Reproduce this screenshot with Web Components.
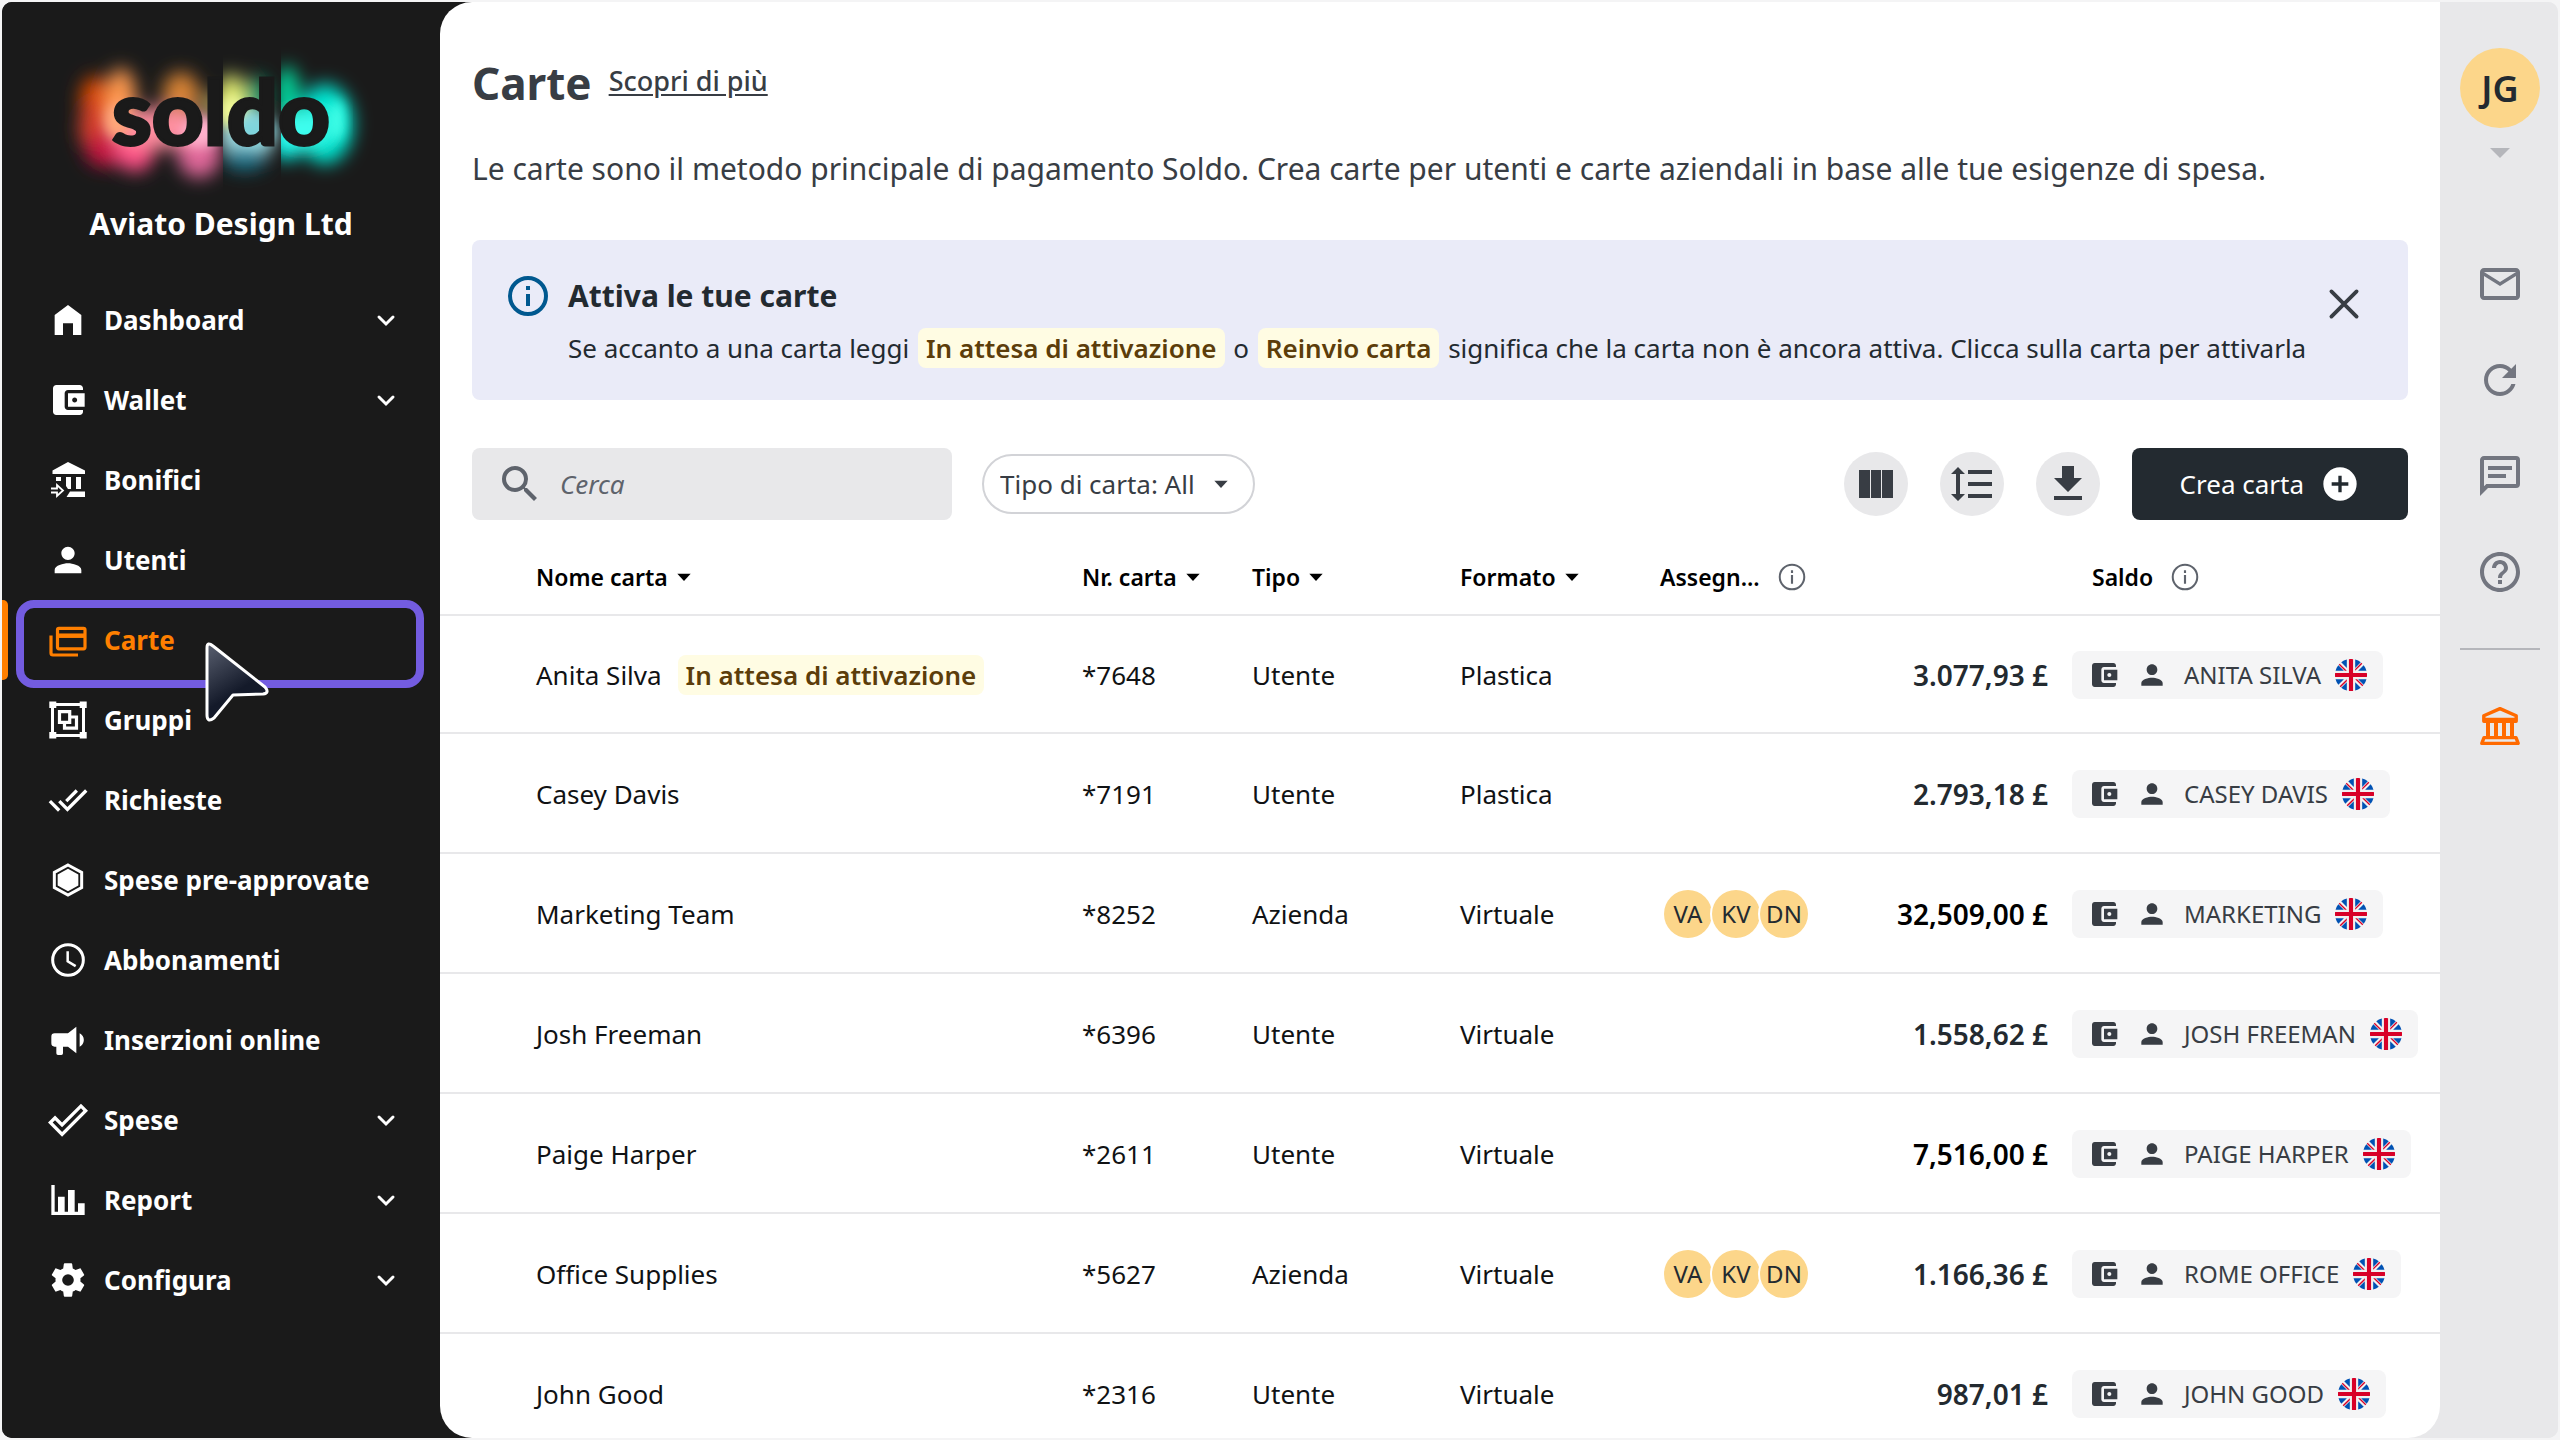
<!DOCTYPE html>
<html lang="it">
<head>
<meta charset="utf-8">
<title>Carte</title>
<style>
  :root {
    --dark: #1a1a1a;
    --ink: #232a30;
    --slate: #383d44;
    --grey: #737680;
    --rail: #e8e8ea;
    --orange: #ff7f00;
    --badge-bg: #fffce3;
    --badge-ink: #5c3d0a;
  }
  body {
    margin: 0;
    background: #f4f4f5;
    font-family: "Noto Sans", "Open Sans", sans-serif;
    font-size: 26px;
    color: #101214;
  }
</style>
</head>
<body>
<app-shell>
  <side-bar slot="sidebar" company="Aviato Design Ltd">
    <nav-item icon="home" expandable>Dashboard</nav-item>
    <nav-item icon="wallet" expandable>Wallet</nav-item>
    <nav-item icon="transfer">Bonifici</nav-item>
    <nav-item icon="person">Utenti</nav-item>
    <nav-item icon="cards" active>Carte</nav-item>
    <nav-item icon="group">Gruppi</nav-item>
    <nav-item icon="done-all">Richieste</nav-item>
    <nav-item icon="hexagon">Spese pre-approvate</nav-item>
    <nav-item icon="clock">Abbonamenti</nav-item>
    <nav-item icon="megaphone">Inserzioni online</nav-item>
    <nav-item icon="check" expandable>Spese</nav-item>
    <nav-item icon="chart" expandable>Report</nav-item>
    <nav-item icon="gear" expandable>Configura</nav-item>
  </side-bar>
  <page-header heading="Carte" link="Scopri di più">Le carte sono il metodo principale di pagamento Soldo. Crea carte per utenti e carte aziendali in base alle tue esigenze di spesa.</page-header>
  <info-banner heading="Attiva le tue carte">Se accanto a una carta leggi <status-badge>In attesa di attivazione</status-badge> o <status-badge>Reinvio carta</status-badge> significa che la carta non è ancora attiva. Clicca sulla carta per attivarla</info-banner>
  <table-toolbar></table-toolbar>
  <cards-table></cards-table>
  <tool-rail slot="rail"></tool-rail>
</app-shell>

<script>
const ICONS = {
  home: '<path d="M4 21V9l8-6 8 6v12h-5v-7H9v7z"/>',
  wallet: '<path d="M21 18v1c0 1.1-.9 2-2 2H5c-1.11 0-2-.9-2-2V5c0-1.1.89-2 2-2h14c1.1 0 2 .9 2 2v1h-9c-1.11 0-2 .9-2 2v8c0 1.1.89 2 2 2h9zm-9-2h10V8H12v8zm4-2.500c-.83 0-1.500-.67-1.500-1.500s.67-1.500 1.500-1.500 1.500.67 1.500 1.500-.67 1.500-1.500 1.500z"/>',
  transfer: '<g transform="scale(.6)"><path d="M20 2l17 8.500V14H4.500v-3.500zM8 17h5v4H8zM18 17h5v12h-3l-2-3zM28 17h5v12h-5zM22 31.500h15V37H18.500z"/><path fill="none" stroke="currentColor" stroke-width="1.800" d="M3 28.500h6V25l6 5.500-6 5.500v-3.500H3"/></g>',
  person: '<path d="M12 12c2.210 0 4-1.790 4-4s-1.790-4-4-4-4 1.790-4 4 1.790 4 4 4zm0 2c-2.670 0-8 1.340-8 4v2h16v-2c0-2.660-5.330-4-8-4z"/>',
  cards: '<g transform="scale(.6)" fill="none" stroke="currentColor" stroke-width="3.200"><rect x="9.500" y="8.300" width="27.500" height="20.500" rx="1.500"/><path d="M9 15.700h28" stroke-width="4.500"/><path d="M3 15.500V33q0 2 2 2h25"/></g>',
  group: '<g transform="scale(.6)"><path fill="none" stroke="currentColor" stroke-width="3" d="M4.500 4.500h31v31h-31z"/><path d="M1.300 1.500h7v6.500h-7zM31.700 1.500h7v6.500h-7zM1.300 32h7v6.500h-7zM31.700 32h7v6.500h-7z"/><path fill="none" stroke="currentColor" stroke-width="3.200" d="M11.500 11.700h10.200v10.600H11.500zM22 17h6.500v11.200h-12V23"/></g>',
  'done-all': '<path d="M18 7l-1.410-1.410-6.340 6.340 1.410 1.410L18 7zm4.240-1.410L11.660 16.170 7.480 12l-1.410 1.410L11.660 19l12-12-1.420-1.410zM.410 13.410L6 19l1.410-1.410L1.830 12 .410 13.410z"/>',
  hexagon: '<path fill="none" stroke="currentColor" stroke-width="1.800" d="M12 3l8.200 4.500v9L12 21l-8.200-4.500v-9z"/><path d="M12 5.300l6.200 3.400v6.600L12 18.700l-6.200-3.400V8.700z"/>',
  clock: '<circle cx="12" cy="12" r="9.200" fill="none" stroke="currentColor" stroke-width="1.800"/><path fill="none" stroke="currentColor" stroke-width="1.500" d="M11.800 6.800v6l4.800 2.900"/>',
  megaphone: '<path d="M12 8H4a2 2 0 0 0-2 2v4a2 2 0 0 0 2 2h1v4a1 1 0 0 0 1 1h2a1 1 0 0 0 1-1v-4h3l5 4V4l-5 4m9.500 4c0 1.710-.96 3.260-2.500 4V8c1.530.75 2.500 2.300 2.500 4z"/>',
  check: '<path fill-rule="evenodd" d="M19.780 2.200L24 6.440 8.440 22 0 13.550l4.220-4.220 4.220 4.220L19.780 2.200m0 2.800L8.440 16.360l-4.220-4.170-1.410 1.360 5.630 5.620L21.190 6.440 19.780 5z"/>',
  chart: '<path d="M22 21H2V3h2v16h2v-9h4v9h2V6h4v13h2v-5h4v7z"/>',
  gear: '<path d="M12 15.500A3.500 3.500 0 0 1 8.500 12 3.500 3.500 0 0 1 12 8.500a3.500 3.500 0 0 1 3.500 3.500 3.500 3.500 0 0 1-3.500 3.500m7.430-2.530c.04-.32.07-.64.07-.97s-.03-.66-.07-1l2.110-1.630c.19-.15.24-.42.12-.64l-2-3.460c-.12-.22-.39-.31-.61-.22l-2.490 1c-.52-.39-1.060-.73-1.690-.98l-.37-2.650A.506.506 0 0 0 14 2h-4c-.25 0-.46.18-.5.42l-.37 2.650c-.63.25-1.170.59-1.690.98l-2.490-1c-.22-.09-.49 0-.61.22l-2 3.460c-.13.22-.07.49.12.64L4.570 11c-.04.34-.07.67-.07 1s.03.65.07.97l-2.110 1.660c-.19.15-.25.42-.12.64l2 3.460c.12.22.39.3.61.22l2.490-1.010c.52.4 1.060.74 1.690.99l.37 2.650c.04.24.25.42.5.42h4c.25 0 .46-.18.5-.42l.37-2.650c.63-.26 1.170-.59 1.690-.99l2.490 1.010c.22.08.49 0 .61-.22l2-3.460c.12-.22.07-.49-.12-.64z"/>',
  chevron: '<path fill="none" stroke="currentColor" stroke-width="3" stroke-linecap="round" d="M5 9l7 7 7-7"/>',
  search: '<path d="M15.500 14h-.79l-.28-.27A6.471 6.471 0 0 0 16 9.500 6.500 6.500 0 1 0 9.500 16c1.610 0 3.090-.59 4.230-1.570l.27.28v.79l5 4.990L20.490 19l-4.990-5zm-6 0C7.010 14 5 11.990 5 9.500S7.010 5 9.500 5 14 7.010 14 9.500 11.990 14 9.500 14z"/>',
  columns: '<path d="M3.500 5H9v14H3.500zM9.500 5h5v14h-5zM15 5h5.500v14H15z"/>',
  spacing: '<path d="M10 13h12v-2H10m0 8h12v-2H10m0-10h12V5H10M6 7h2.500L5 3.500 1.500 7H4v10H1.500L5 20.500 8.500 17H6V7z"/>',
  download: '<path d="M5 20h14v-2H5m14-9h-4V3H9v6H5l7 7 7-7z"/>',
  plus: '<path d="M17 13h-4v4h-2v-4H7v-2h4V7h2v4h4m-5-9A10 10 0 1 0 22 12 10 10 0 0 0 12 2z"/>',
  info: '<circle cx="12" cy="12" r="9" fill="none" stroke="currentColor" stroke-width="2"/><path d="M11 7h2v2h-2zM11 11h2v6h-2z"/>',
  'info-thin': '<circle cx="12" cy="12" r="9.200" fill="none" stroke="currentColor" stroke-width="1.500"/><path d="M11.200 7h1.600v2h-1.600zM11.200 10.500h1.600V17h-1.600z"/>',
  close: '<path fill="none" stroke="currentColor" stroke-width="1.900" stroke-linecap="round" d="M5.700 5.700l12.600 12.600M18.300 5.700L5.700 18.300"/>',
  caret: '<path d="M2 7h20L12 18z"/>',
  mail: '<path d="M20 4H4c-1.100 0-2 .9-2 2v12c0 1.100.9 2 2 2h16c1.100 0 2-.9 2-2V6c0-1.100-.9-2-2-2zm0 14H4V8l8 5 8-5v10zm-8-7L4 6h16l-8 5z"/>',
  refresh: '<path d="M17.650 6.350C16.200 4.900 14.210 4 12 4c-4.420 0-7.990 3.580-7.990 8s3.570 8 7.990 8c3.730 0 6.840-2.550 7.730-6h-2.080c-.82 2.330-3.040 4-5.650 4-3.310 0-6-2.690-6-6s2.690-6 6-6c1.660 0 3.140.69 4.220 1.780L13 11h7V4l-2.350 2.350z"/>',
  chat: '<path d="M20 2a2 2 0 0 1 2 2v12a2 2 0 0 1-2 2H6l-4 4V4c0-1.110.9-2 2-2h16M4 4v13.170L5.170 16H20V4H4m2 3h12v2H6V7m0 4h9v2H6v-2z"/>',
  help: '<path d="M11 18h2v-2h-2v2zm1-16C6.480 2 2 6.480 2 12s4.480 10 10 10 10-4.480 10-10S17.520 2 12 2zm0 18c-4.410 0-8-3.590-8-8s3.590-8 8-8 8 3.590 8 8-3.590 8-8 8zm0-14c-2.210 0-4 1.790-4 4h2c0-1.100.9-2 2-2s2 .9 2 2c0 2-3 1.750-3 5h2c0-2.250 3-2.500 3-5 0-2.210-1.790-4-4-4z"/>',
  bank: '<g fill="none" stroke="currentColor" stroke-width="1.700"><path d="M3.900 9.600V6.900L12 3.300l8.100 3.600v2.700z" stroke-linejoin="round"/><path d="M3.500 8.800h17" stroke-width="1.800"/><path d="M6 10v7.500M10 10v7.500M14 10v7.500M18 10v7.500" stroke-width="2"/><path d="M4 17.800h16l1.100 2.900H2.900z" stroke-linejoin="round"/></g>',
};

const FLAG = `<svg viewBox="0 0 512 512" role="img" aria-label="GBP">
  <circle cx="256" cy="256" r="256" fill="#f0f0f0"/>
  <path fill="#0052b4" d="M53 100C33 126 18 156 9 189h133zM503 189c-9-33-24-63-44-89l-89 89zM9 323c9 33 24 63 44 89l89-89zM412 53c-26-20-56-35-89-44v133zM100 459c26 20 56 35 89 44V370zM189 9c-33 9-63 24-89 44l89 89zM323 503c33-9 63-24 89-44l-89-89zM370 323l89 89c20-26 35-56 44-89z"/>
  <path fill="#d80027" d="M510 223H289V2a258 258 0 0 0-66 0v221H2a258 258 0 0 0 0 66h221v221a258 258 0 0 0 66 0V289h221a258 258 0 0 0 0-66zM323 323l114 114 15-16-98-98zM189 323L75 437l16 15 98-98zM189 189L75 75 60 91l98 98zM323 189L437 75l-16-15-98 98z"/>
</svg>`;

class AppIcon extends HTMLElement {
  connectedCallback() {
    if (this.shadowRoot) return;
    this.attachShadow({ mode: 'open' });
    this.shadowRoot.innerHTML = `
      <style>
        :host { display: block; flex: none; width: var(--icon-size, 40px); height: var(--icon-size, 40px); }
        svg { display: block; width: 100%; height: 100%; }
      </style>
      <svg viewBox="0 0 24 24" fill="currentColor" aria-hidden="true">${ICONS[this.getAttribute('name')]}</svg>
    `;
  }
}

class AppShell extends HTMLElement {
  constructor() {
    super();
    this.attachShadow({ mode: 'open' });
    this.shadowRoot.innerHTML = `
      <style>
        :host {
          display: flex;
          height: calc(100vh - 4px);
          margin: 2px;
          border-radius: 10px;
          overflow: hidden;
          background: linear-gradient(to right, var(--dark) 50%, var(--rail) 50%);
        }
        main {
          flex: 1;
          min-width: 0;
          overflow: hidden;
          background: #fff;
          border-radius: 32px 0 32px 32px;
        }
      </style>
      <slot name="sidebar"></slot>
      <main><slot></slot></main>
      <slot name="rail"></slot>
    `;
  }
}

class BrandLogo extends HTMLElement {
  constructor() {
    super();
    this.attachShadow({ mode: 'open' });
    this.shadowRoot.innerHTML = `
      <style>
        :host { display: block; }
        svg { display: block; width: 340px; height: 160px; margin: 0 auto; }
        text {
          font: 900 90px Lato, "Noto Sans", sans-serif;
          fill: var(--dark);
          stroke: var(--dark);
          stroke-width: 3px;
        }
      </style>
      <svg viewBox="0 0 340 160" role="img" aria-label="soldo">
        <defs>
          <filter id="soft" x="-50%" y="-50%" width="200%" height="200%"><feGaussianBlur stdDeviation="9"/></filter>
          <filter id="tight" x="-50%" y="-50%" width="200%" height="200%"><feGaussianBlur stdDeviation="6"/></filter>
          <clipPath id="left-of-l"><path d="M0 0h172v160H0z"/></clipPath>
          <clipPath id="right-of-l"><path d="M172 0h58v160h-58z"/></clipPath>
          <clipPath id="right-of-d"><path d="M230 0h110v160H230z"/></clipPath>
        </defs>
        <g clip-path="url(#left-of-l)">
          <g filter="url(#soft)">
            <ellipse cx="44" cy="56" rx="15" ry="24" fill="#d94a00"/>
            <ellipse cx="44" cy="84" rx="16" ry="26" fill="#d8402c"/>
            <ellipse cx="54" cy="106" rx="20" ry="17" fill="#c41440"/>
            <ellipse cx="70" cy="54" rx="15" ry="30" fill="#ff9a50"/>
            <ellipse cx="84" cy="106" rx="20" ry="22" fill="#ff4f86"/>
            <ellipse cx="130" cy="50" rx="18" ry="22" fill="#d98434"/>
            <ellipse cx="148" cy="108" rx="22" ry="26" fill="#e0689a"/>
            <ellipse cx="106" cy="84" rx="46" ry="20" fill="#ff8fa0"/>
            <ellipse cx="162" cy="62" rx="10" ry="14" fill="#b8a860"/>
          </g>
          <ellipse cx="150" cy="88" rx="20" ry="16" fill="#ffb0cc" filter="url(#tight)"/>
          <ellipse cx="66" cy="76" rx="12" ry="18" fill="#ffa878" filter="url(#tight)"/>
        </g>
        <g clip-path="url(#right-of-l)">
          <g filter="url(#soft)">
            <ellipse cx="180" cy="54" rx="15" ry="24" fill="#e0ea70"/>
            <ellipse cx="206" cy="54" rx="12" ry="22" fill="#14a070"/>
            <ellipse cx="196" cy="92" rx="28" ry="24" fill="#a8e4ea"/>
            <ellipse cx="194" cy="114" rx="22" ry="12" fill="#1f7a92"/>
          </g>
          <ellipse cx="180" cy="68" rx="12" ry="16" fill="#f2fa98" filter="url(#tight)"/>
          <ellipse cx="204" cy="86" rx="20" ry="14" fill="#7fd4dc" filter="url(#tight)"/>
        </g>
        <g clip-path="url(#right-of-d)">
          <g filter="url(#soft)">
            <ellipse cx="236" cy="50" rx="12" ry="28" fill="#00dca0"/>
            <ellipse cx="274" cy="80" rx="28" ry="40" fill="#00e6d2"/>
            <ellipse cx="236" cy="92" rx="18" ry="24" fill="#00fff0"/>
            <ellipse cx="252" cy="84" rx="28" ry="16" fill="#40fff0"/>
          </g>
          <ellipse cx="286" cy="76" rx="8" ry="20" fill="#40ffe8" filter="url(#tight)"/>
        </g>
        <text x="170" y="101" text-anchor="middle">soldo</text>
      </svg>
    `;
  }
}

class SideBar extends HTMLElement {
  constructor() {
    super();
    this.attachShadow({ mode: 'open' });
  }

  connectedCallback() {
    this.shadowRoot.innerHTML = `
      <style>
        :host {
          display: block;
          flex: none;
          box-sizing: border-box;
          width: 438px;
          padding-top: 42px;
          background: var(--dark);
          color: #fff;
        }
        .company {
          margin: 0;
          font-size: 30px;
          font-weight: 700;
          line-height: 40px;
          text-align: center;
        }
        nav { padding-top: 36px; }
      </style>
      <brand-logo></brand-logo>
      <p class="company">${this.getAttribute('company')}</p>
      <nav aria-label="Menu"><slot></slot></nav>
    `;
  }
}

class NavItem extends HTMLElement {
  constructor() {
    super();
    this.attachShadow({ mode: 'open' });
  }

  connectedCallback() {
    const expandable = this.hasAttribute('expandable');
    const content = `<app-icon name="${this.getAttribute('icon')}"></app-icon><span><slot></slot></span>`;
    this.shadowRoot.innerHTML = `
      <style>
        :host { display: block; position: relative; }
        :host([active]) { color: var(--orange); z-index: 1; }
        a, button {
          box-sizing: border-box;
          display: flex;
          align-items: center;
          gap: 16px;
          width: 100%;
          height: 80px;
          padding: 0 42px 0 46px;
          border: 0;
          background: none;
          color: inherit;
          font: 700 26px/40px "Noto Sans", "Open Sans", sans-serif;
          text-align: left;
          text-decoration: none;
          white-space: nowrap;
        }
        span { flex: 1; }
        .chevron { --icon-size: 24px; }
        .bar {
          position: absolute;
          left: 0;
          top: 0;
          width: 6px;
          height: 80px;
          border-radius: 0 5px 5px 0;
          background: var(--orange);
        }
        .ring {
          position: absolute;
          box-sizing: border-box;
          left: 14px;
          right: 16px;
          top: 0;
          height: 88px;
          border: 8px solid #735ce0;
          border-radius: 18px;
          pointer-events: none;
        }
        .pointer {
          position: absolute;
          left: 200px;
          top: 40px;
          width: 68px;
          height: 84px;
          pointer-events: none;
        }
      </style>
      ${expandable
        ? `<button type="button" aria-expanded="false">${content}<app-icon class="chevron" name="chevron"></app-icon></button>`
        : `<a href="#">${content}</a>`}
      ${this.hasAttribute('active') ? `
        <div class="bar"></div>
        <div class="ring"></div>
        <svg class="pointer" viewBox="0 0 68 84" aria-hidden="true">
          <defs><linearGradient id="shade" x1="0" y1="0" x2=".5" y2="1">
            <stop offset="0" stop-color="#5a6070"/><stop offset=".7" stop-color="#141a2a"/>
          </linearGradient></defs>
          <path fill="url(#shade)" stroke="#fff" stroke-width="3" stroke-linejoin="round"
            d="M5 8q0-7 6-2l52 41q5 6-2 7l-30 1L12 78q-7 5-7-3z"/>
        </svg>` : ''}
    `;
  }
}

class PageHeader extends HTMLElement {
  constructor() {
    super();
    this.attachShadow({ mode: 'open' });
  }

  connectedCallback() {
    this.shadowRoot.innerHTML = `
      <style>
        :host { display: block; padding: 48px 32px 46px; color: var(--slate); }
        .title { display: flex; align-items: center; gap: 17px; }
        h1 { margin: 0; font-size: 44px; line-height: 66px; }
        a { color: inherit; font-size: 27px; font-weight: 500; line-height: 40px; text-underline-offset: 3px; padding-bottom: 4px; }
        p { margin: 28px 0 0; font-size: 30px; line-height: 50px; }
      </style>
      <div class="title">
        <h1>${this.getAttribute('heading')}</h1>
        <a href="#">${this.getAttribute('link')}</a>
      </div>
      <p><slot></slot></p>
    `;
  }
}

class StatusBadge extends HTMLElement {
  constructor() {
    super();
    this.attachShadow({ mode: 'open' });
    this.shadowRoot.innerHTML = `
      <style>
        :host {
          display: inline-block;
          margin: 0 2px;
          padding: 0 8px;
          border-radius: 8px;
          background: var(--badge-bg);
          color: var(--badge-ink);
          font-size: 26px;
          font-weight: 600;
          line-height: 40px;
          white-space: nowrap;
        }
      </style>
      <slot></slot>
    `;
  }
}

class InfoBanner extends HTMLElement {
  constructor() {
    super();
    this.attachShadow({ mode: 'open' });
  }

  connectedCallback() {
    this.shadowRoot.innerHTML = `
      <style>
        :host {
          display: flex;
          align-items: flex-start;
          gap: 16px;
          margin: 0 32px;
          padding: 36px 40px 32px 32px;
          border-radius: 8px;
          background: #eaebf8;
          color: var(--ink);
        }
        .info { --icon-size: 48px; margin-top: -4px; color: #00588f; }
        .text { flex: 1; min-width: 0; white-space: nowrap; }
        h2 { margin: 0 0 12px; font-size: 30px; line-height: 40px; }
        p { margin: 0; line-height: 40px; }
        button {
          --icon-size: 48px;
          margin: 4px 0 0 -16px;
          padding: 0;
          border: 0;
          background: none;
          color: var(--slate);
        }
      </style>
      <app-icon class="info" name="info"></app-icon>
      <div class="text">
        <h2>${this.getAttribute('heading')}</h2>
        <p><slot></slot></p>
      </div>
      <button type="button" aria-label="Chiudi"><app-icon name="close"></app-icon></button>
    `;
  }
}

class TableToolbar extends HTMLElement {
  constructor() {
    super();
    this.attachShadow({ mode: 'open' });
    this.shadowRoot.innerHTML = `
      <style>
        :host { display: flex; align-items: center; padding: 48px 32px 0; color: var(--slate); }
        input, select, button { font: inherit; color: inherit; }
        .search {
          --icon-size: 48px;
          box-sizing: border-box;
          display: flex;
          align-items: center;
          gap: 16px;
          width: 480px;
          height: 72px;
          padding: 0 24px;
          border-radius: 8px;
          background: var(--rail);
          color: #5e636c;
        }
        input { flex: 1; min-width: 0; padding: 0; border: 0; outline: 0; background: none; }
        input::placeholder { color: #5e636c; font-style: italic; opacity: 1; }
        .filter { --icon-size: 16px; position: relative; margin-left: 30px; }
        select {
          appearance: none;
          height: 60px;
          padding: 0 58px 0 16px;
          border: 2px solid #d2d3d7;
          border-radius: 30px;
          background: #fff;
        }
        .filter app-icon { position: absolute; right: 26px; top: 22px; pointer-events: none; }
        .actions { display: flex; align-items: center; gap: 32px; margin-left: auto; }
        .round {
          --icon-size: 48px;
          display: grid;
          place-items: center;
          width: 64px;
          height: 64px;
          padding: 0;
          border: 0;
          border-radius: 50%;
          background: var(--rail);
        }
        .create {
          display: flex;
          align-items: center;
          gap: 16px;
          height: 72px;
          padding: 0 48px;
          border: 0;
          border-radius: 8px;
          background: var(--ink);
          color: #fff;
        }
      </style>
      <label class="search"><app-icon name="search"></app-icon><input type="search" placeholder="Cerca" aria-label="Cerca"></label>
      <div class="filter">
        <select aria-label="Tipo di carta"><option>Tipo di carta: All</option></select>
        <app-icon name="caret"></app-icon>
      </div>
      <div class="actions">
        <button type="button" class="round" aria-label="Colonne"><app-icon name="columns"></app-icon></button>
        <button type="button" class="round" aria-label="Spaziatura righe"><app-icon name="spacing"></app-icon></button>
        <button type="button" class="round" aria-label="Scarica"><app-icon name="download"></app-icon></button>
        <button type="button" class="create">Crea carta<app-icon name="plus"></app-icon></button>
      </div>
    `;
  }
}

class UserInitials extends HTMLElement {
  constructor() {
    super();
    this.attachShadow({ mode: 'open' });
    this.shadowRoot.innerHTML = `
      <style>
        :host {
          display: grid;
          place-items: center;
          width: 48px;
          height: 48px;
          border-radius: 50%;
          box-shadow: 0 0 0 2px #fff;
          background: #fcd68a;
          color: var(--ink);
          font-size: 24px;
        }
      </style>
      <slot></slot>
    `;
  }
}

class WalletChip extends HTMLElement {
  constructor() {
    super();
    this.attachShadow({ mode: 'open' });
    this.shadowRoot.innerHTML = `
      <style>
        :host {
          --icon-size: 32px;
          display: inline-flex;
          align-items: center;
          vertical-align: middle;
          height: 48px;
          padding: 0 16px;
          border-radius: 8px;
          background: #f5f5f6;
          color: var(--slate);
          font-size: 24px;
          white-space: nowrap;
        }
        .person { margin: 0 16px; }
        svg { display: block; width: 32px; height: 32px; margin-left: 14px; }
      </style>
      <app-icon name="wallet"></app-icon>
      <app-icon class="person" name="person"></app-icon>
      <slot></slot>
      ${FLAG}
    `;
  }
}

const CARDS = [
  { name: 'Anita Silva', status: 'In attesa di attivazione', number: '*7648', type: 'Utente', format: 'Plastica', users: [], balance: '3.077,93 £', wallet: 'ANITA SILVA' },
  { name: 'Casey Davis', number: '*7191', type: 'Utente', format: 'Plastica', users: [], balance: '2.793,18 £', wallet: 'CASEY DAVIS' },
  { name: 'Marketing Team', number: '*8252', type: 'Azienda', format: 'Virtuale', users: ['VA', 'KV', 'DN'], balance: '32,509,00 £', strong: true, wallet: 'MARKETING' },
  { name: 'Josh Freeman', number: '*6396', type: 'Utente', format: 'Virtuale', users: [], balance: '1.558,62 £', wallet: 'JOSH FREEMAN' },
  { name: 'Paige Harper', number: '*2611', type: 'Utente', format: 'Virtuale', users: [], balance: '7,516,00 £', strong: true, wallet: 'PAIGE HARPER' },
  { name: 'Office Supplies', number: '*5627', type: 'Azienda', format: 'Virtuale', users: ['VA', 'KV', 'DN'], balance: '1.166,36 £', wallet: 'ROME OFFICE' },
  { name: 'John Good', number: '*2316', type: 'Utente', format: 'Virtuale', users: [], balance: '987,01 £', wallet: 'JOHN GOOD' },
];

class CardsTable extends HTMLElement {
  constructor() {
    super();
    this.attachShadow({ mode: 'open' });
  }

  connectedCallback() {
    this.render();
  }

  sortButton(label) {
    return `<button type="button">${label}<app-icon name="caret"></app-icon></button>`;
  }

  row(card) {
    return `
      <tr>
        <td class="name">${card.name}${card.status ? `<status-badge>${card.status}</status-badge>` : ''}</td>
        <td>${card.number}</td>
        <td>${card.type}</td>
        <td>${card.format}</td>
        <td><div class="users">${card.users.map((user) => `<user-initials>${user}</user-initials>`).join('')}</div></td>
        <td class="balance${card.strong ? ' strong' : ''}">${card.balance}</td>
        <td><wallet-chip>${card.wallet}</wallet-chip></td>
      </tr>
    `;
  }

  render() {
    this.shadowRoot.innerHTML = `
      <style>
        :host { display: block; }
        table { width: 100%; table-layout: fixed; border-spacing: 0; }
        th, td { box-sizing: border-box; padding: 0; border-bottom: 2px solid #e8e8ea; text-align: left; white-space: nowrap; }
        th { height: 96px; padding-top: 20px; font-size: 23px; font-weight: 600; color: #000; }
        td { height: 120px; padding-top: 2px; line-height: 40px; }
        tbody tr:first-child td { height: 118px; }
        th:first-child, td:first-child { padding-left: 96px; }
        th:last-child, td:last-child { padding-left: 24px; }
        .number { width: 170px; }
        .type { width: 208px; }
        .format { width: 200px; }
        .assigned { width: 188px; }
        .amount { width: 200px; }
        .wallet { width: 392px; }
        th button {
          --icon-size: 16px;
          display: flex;
          align-items: center;
          gap: 8px;
          padding: 0;
          border: 0;
          background: none;
          font: inherit;
          color: inherit;
        }
        .hint { --icon-size: 32px; display: flex; align-items: center; gap: 16px; }
        .hint app-icon { color: #5e636c; }
        .wallet .hint { margin-left: 20px; }
        .name status-badge { margin-left: 16px; }
        .users { display: flex; padding-left: 4px; }
        .balance { font-size: 28px; font-weight: 600; color: var(--ink); text-align: right; }
        .strong { color: #000; }
      </style>
      <table>
        <thead>
          <tr>
            <th>${this.sortButton('Nome carta')}</th>
            <th class="number">${this.sortButton('Nr. carta')}</th>
            <th class="type">${this.sortButton('Tipo')}</th>
            <th class="format">${this.sortButton('Formato')}</th>
            <th class="assigned"><div class="hint">Assegn...<app-icon name="info-thin"></app-icon></div></th>
            <th class="amount"></th>
            <th class="wallet"><div class="hint">Saldo<app-icon name="info-thin"></app-icon></div></th>
          </tr>
        </thead>
        <tbody>${CARDS.map((card) => this.row(card)).join('')}</tbody>
      </table>
    `;
  }
}

class ToolRail extends HTMLElement {
  constructor() {
    super();
    this.attachShadow({ mode: 'open' });
    this.shadowRoot.innerHTML = `
      <style>
        :host {
          --icon-size: 48px;
          display: flex;
          flex: none;
          flex-direction: column;
          align-items: center;
          box-sizing: border-box;
          width: 118px;
          padding: 46px 0 0 2px;
          background: var(--rail);
          color: var(--grey);
        }
        button { display: block; padding: 0; border: 0; background: none; font: inherit; color: inherit; }
        .profile user-initials {
          width: 80px;
          height: 80px;
          box-shadow: none;
          font-size: 36px;
          font-weight: 600;
        }
        .arrow {
          width: 0;
          margin: 20px auto 0;
          border: 10px solid transparent;
          border-top-color: #b5b6bb;
          border-bottom: 0;
        }
        .tools { display: flex; flex-direction: column; gap: 48px; margin-top: 102px; }
        hr { width: 80px; height: 2px; margin: 52px 0; border: 0; background: #b5b6bb; }
        .bank { color: #ff6a00; }
      </style>
      <button type="button" class="profile" aria-label="Profilo"><user-initials>JG</user-initials><div class="arrow"></div></button>
      <div class="tools">
        <button type="button" aria-label="Messaggi"><app-icon name="mail"></app-icon></button>
        <button type="button" aria-label="Aggiorna"><app-icon name="refresh"></app-icon></button>
        <button type="button" aria-label="Chat"><app-icon name="chat"></app-icon></button>
        <button type="button" aria-label="Aiuto"><app-icon name="help"></app-icon></button>
      </div>
      <hr>
      <button type="button" class="bank" aria-label="Banca"><app-icon name="bank"></app-icon></button>
    `;
  }
}

customElements.define('app-icon', AppIcon);
customElements.define('app-shell', AppShell);
customElements.define('brand-logo', BrandLogo);
customElements.define('side-bar', SideBar);
customElements.define('nav-item', NavItem);
customElements.define('page-header', PageHeader);
customElements.define('status-badge', StatusBadge);
customElements.define('info-banner', InfoBanner);
customElements.define('table-toolbar', TableToolbar);
customElements.define('user-initials', UserInitials);
customElements.define('wallet-chip', WalletChip);
customElements.define('cards-table', CardsTable);
customElements.define('tool-rail', ToolRail);
</script>
</body>
</html>
